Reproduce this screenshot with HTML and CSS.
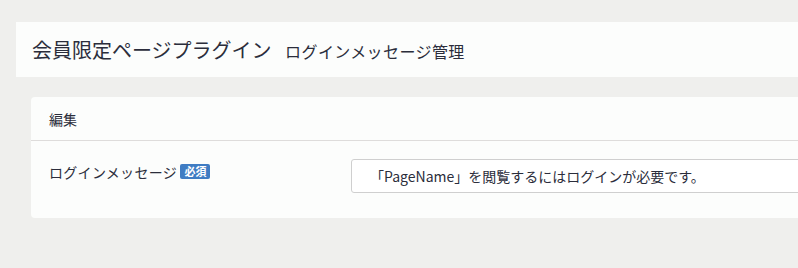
FILE: index.html
```html
<!DOCTYPE html>
<html lang="ja">
<head>
    <meta charset="UTF-8">
    <meta name="viewport" content="width=device-width, initial-scale=1.0">
    <title>ログインメッセージ管理</title>
    <link rel="stylesheet" href="styles.css">
</head>
<body>
    <div class="page">
        <div class="page-header">
            <h1>会員限定ページプラグイン <small>ログインメッセージ管理</small></h1>
        </div>

        <div class="card">
            <div class="card-header">編集</div>
            <div class="card-body">
                <div class="form-row">
                    <label for="message">ログインメッセージ <span class="badge">必須</span></label>
                    <input type="text" id="message" name="message" value="「PageName」を閲覧するにはログインが必要です。">
                </div>
            </div>
        </div>
    </div>
</body>
</html>
```

FILE: styles.css
```css
body {
    font-family: "Noto Sans CJK JP", "Noto Sans", sans-serif;
    background-color: #efefed;
    color: #2b2d3b;
    margin: 0;
    padding: 0;
    overflow: hidden;
}
.page {
    width: 820px;
    padding: 22px 0 0 16px;
}
.page-header {
    background: #fcfdfc;
    height: 55px;
    padding: 0 16px;
    display: flex;
    align-items: center;
}
.page-header h1 {
    margin: 0;
    font-size: 20px;
    font-weight: normal;
    line-height: 1;
}
.page-header small {
    font-size: 16px;
    margin-left: 9px;
    letter-spacing: 0.4px;
}
.card {
    margin: 20px 0 0 15px;
    background: #fcfdfc;
    border-radius: 4px;
}
.card-header {
    height: 43px;
    padding: 0 18px;
    display: flex;
    align-items: center;
    font-size: 14px;
    border-bottom: 1px solid #dedcdb;
}
.card-body {
    padding: 18px 18px 25px;
}
.form-row {
    display: grid;
    grid-template-columns: 302px 1fr;
    align-items: start;
}
.form-row label {
    font-size: 14px;
    padding-top: 3px;
    letter-spacing: 0.3px;
}
.badge {
    display: inline-block;
    background: #3f7cc3;
    color: #fff;
    font-size: 11px;
    font-weight: bold;
    line-height: 15px;
    padding: 0 4px;
    border-radius: 2px;
    vertical-align: 2px;
    letter-spacing: 0;
}
.form-row input {
    height: 34px;
    box-sizing: border-box;
    border: 1px solid #cfcfcf;
    border-radius: 3px;
    padding: 0 18px;
    font-family: inherit;
    font-size: 14px;
    color: #2b2d3b;
    background: #fff;
}
```
